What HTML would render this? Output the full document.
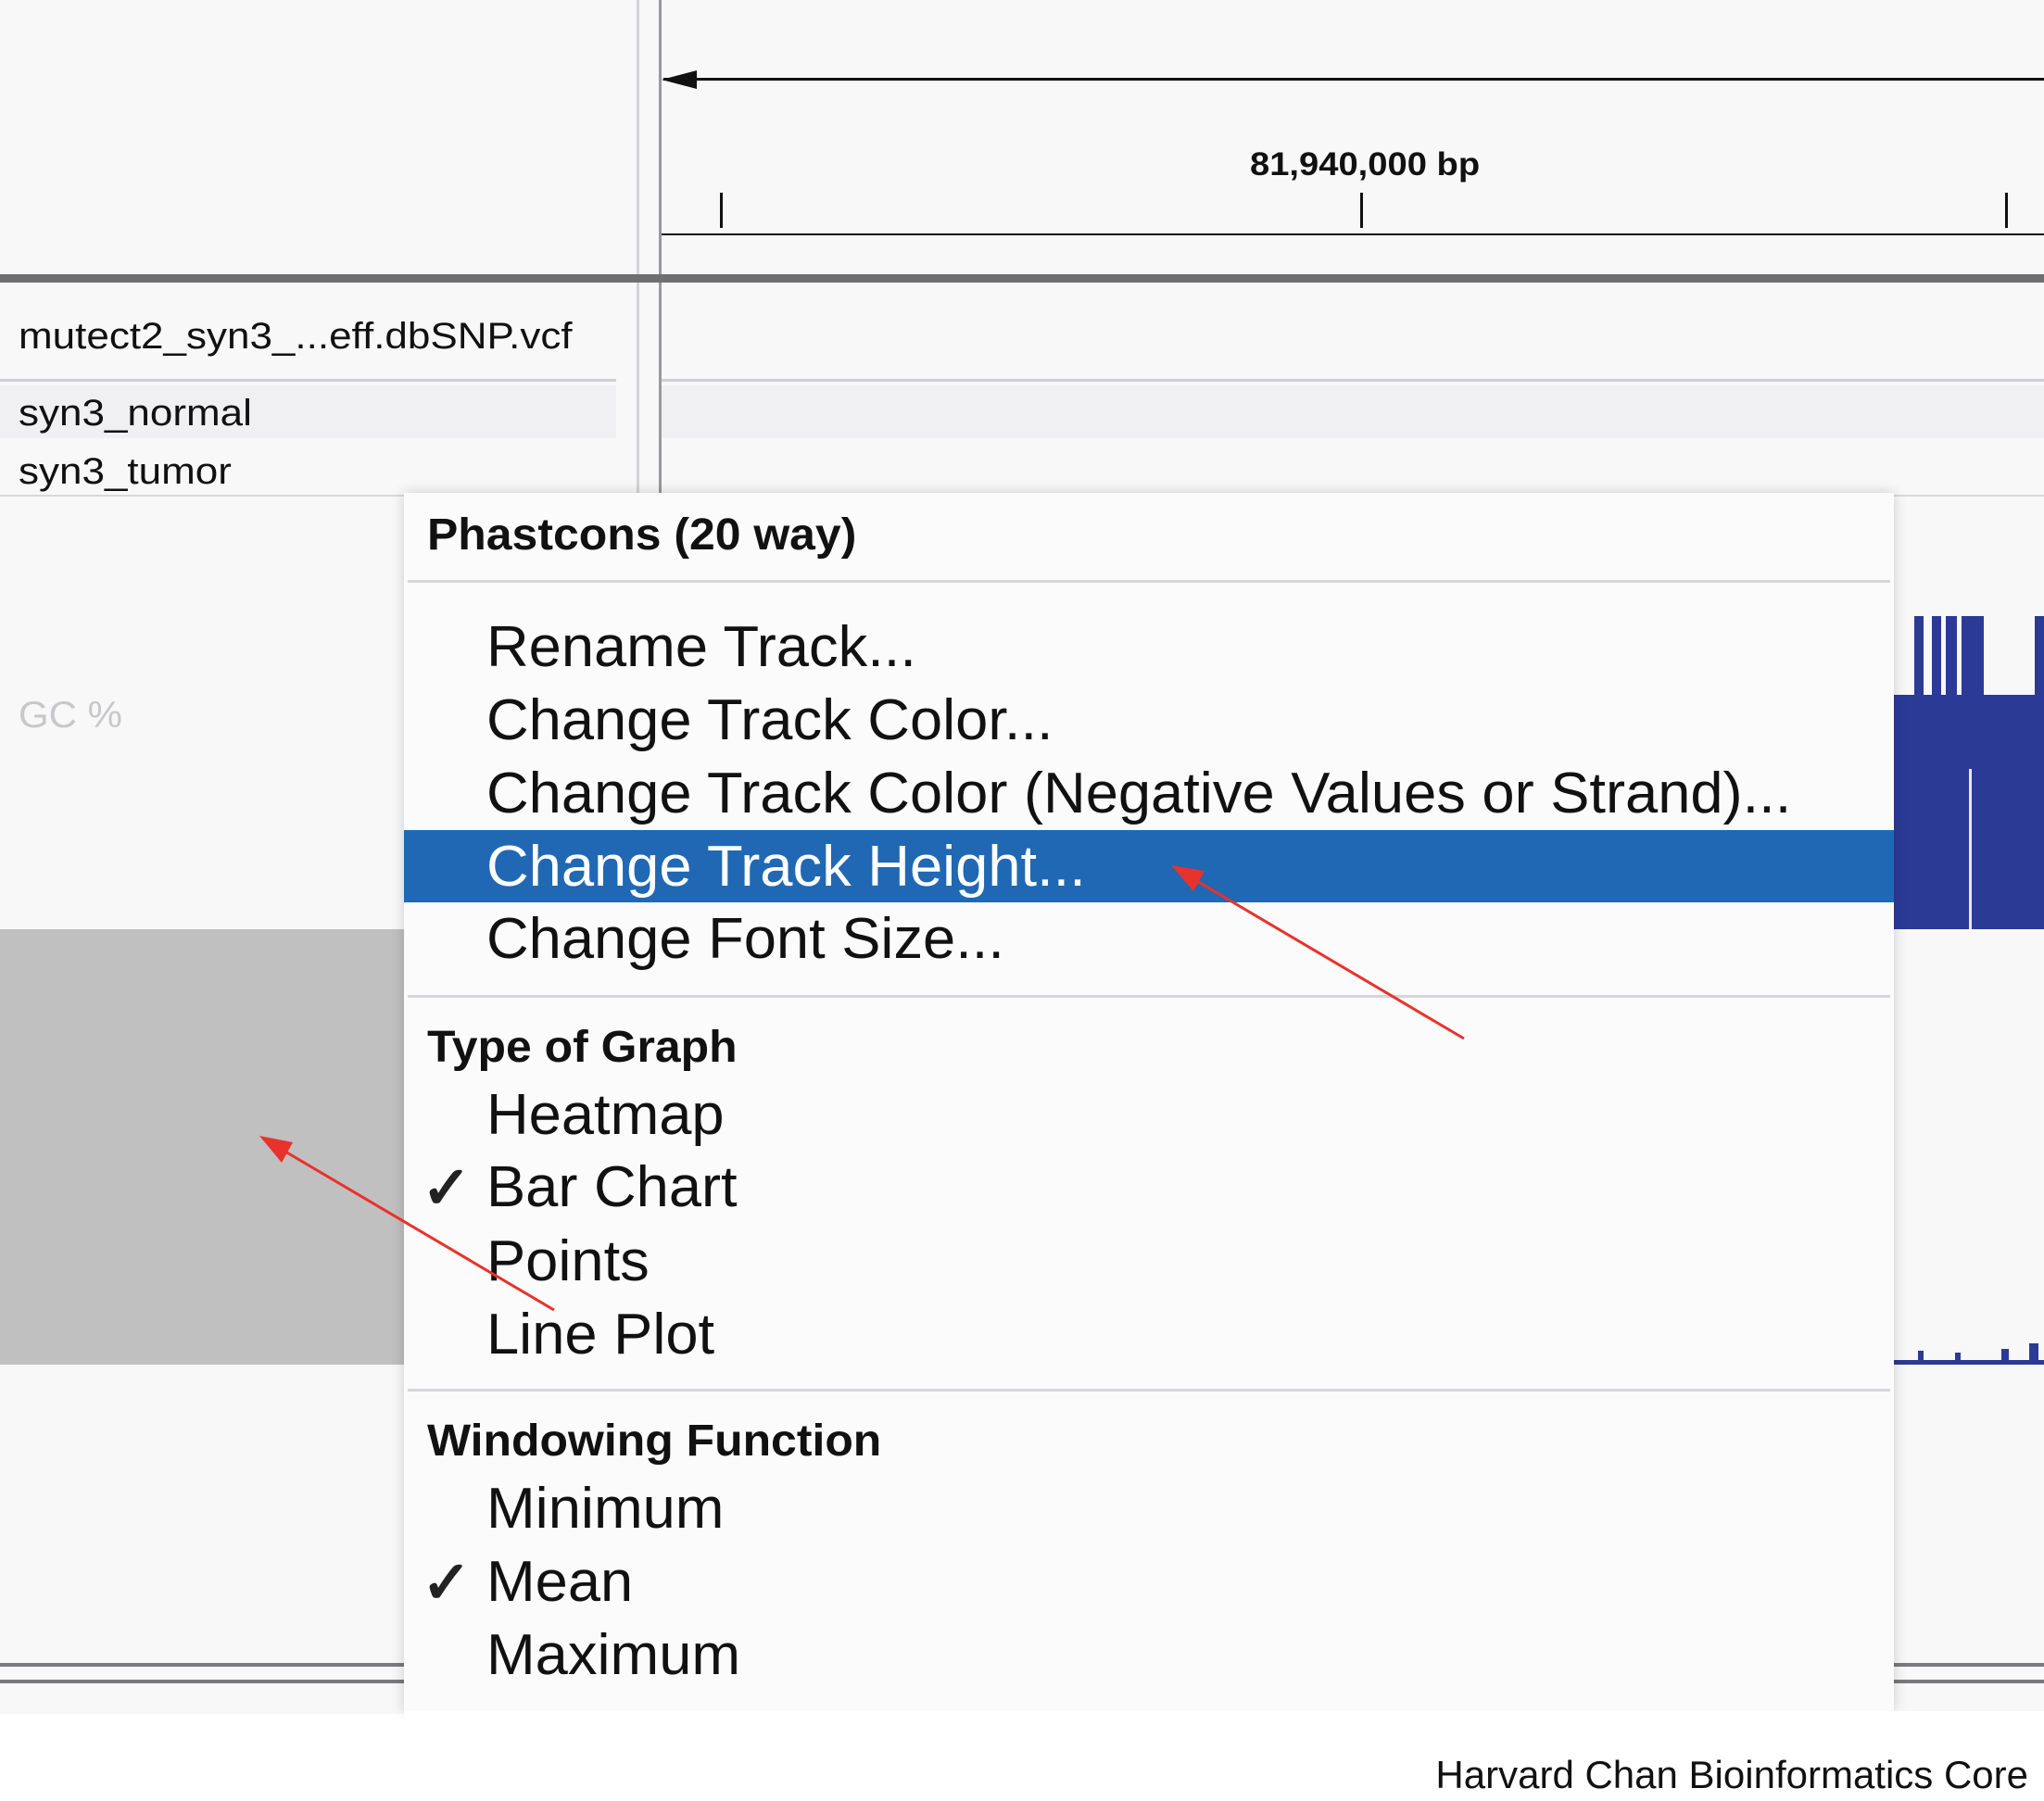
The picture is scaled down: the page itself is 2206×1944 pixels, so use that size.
<!DOCTYPE html>
<html><head><meta charset="utf-8"><style>
html,body{margin:0;padding:0}
body{width:2206px;height:1944px;position:relative;background:#fff;overflow:hidden;font-family:"Liberation Sans",sans-serif}
.a{position:absolute}
.t{position:absolute;white-space:nowrap;line-height:1}
.mi{position:absolute;left:525px;font-size:62px;color:#111;white-space:nowrap;line-height:1;transform:scaleX(1.02);transform-origin:left center}
.hd{position:absolute;left:461px;font-size:48px;font-weight:bold;color:#111;white-space:nowrap;line-height:1;transform:scaleX(1.04);transform-origin:left center}
.ck{position:absolute;left:455px;font-size:64px;font-weight:bold;color:#222;line-height:1}
.tn{position:absolute;left:20px;font-size:40px;color:#111;white-space:nowrap;line-height:1;transform:scaleX(1.1);transform-origin:left center}
</style></head><body>
<div class="a" style="left:0;top:0;width:2206px;height:1850px;background:#f8f8f9"></div>
<div class="a" style="left:687px;top:0;width:3px;height:540px;background:#d4d4d6"></div>
<div class="a" style="left:711px;top:0;width:3px;height:540px;background:#9a9a9c"></div>
<div class="a" style="left:716px;top:84px;width:1490px;height:3px;background:#111"></div>
<svg class="a" style="left:712px;top:74px" width="40" height="24"><polygon points="2,12 40,2 40,22" fill="#111"/></svg>
<div class="t" style="left:1349px;top:160px;font-size:35px;font-weight:bold;color:#111;transform:scaleX(1.09);transform-origin:left center">81,940,000 bp</div>
<div class="a" style="left:777px;top:208px;width:3px;height:38px;background:#111"></div>
<div class="a" style="left:1468px;top:208px;width:3px;height:38px;background:#111"></div>
<div class="a" style="left:2164px;top:208px;width:3px;height:38px;background:#111"></div>
<div class="a" style="left:714px;top:252px;width:1492px;height:2px;background:#111"></div>
<div class="a" style="left:0;top:296px;width:2206px;height:9px;background:#6f6f71"></div>
<div class="tn" style="top:343px">mutect2_syn3_...eff.dbSNP.vcf</div>
<div class="a" style="left:0;top:409px;width:665px;height:3px;background:#cfcfd1"></div>
<div class="a" style="left:714px;top:409px;width:1492px;height:3px;background:#cfcfd1"></div>
<div class="a" style="left:0;top:416px;width:665px;height:57px;background:#f0f0f2"></div>
<div class="a" style="left:714px;top:416px;width:1492px;height:57px;background:#f0f0f2"></div>
<div class="tn" style="top:426px">syn3_normal</div>
<div class="tn" style="top:489px">syn3_tumor</div>
<div class="a" style="left:0;top:534px;width:2206px;height:2px;background:#d8d8da"></div>
<div class="t" style="left:20px;top:752px;font-size:40px;color:#c8c8ca;transform:scaleX(1.05);transform-origin:left center">GC %</div>
<div class="a" style="left:0;top:1003px;width:436px;height:470px;background:#c0c0c0"></div>
<div class="a" style="left:2044px;top:750px;width:162px;height:253px;background:#2b3a95"></div>
<div class="a" style="left:2066px;top:665px;width:10px;height:90px;background:#2b3a95"></div>
<div class="a" style="left:2085px;top:665px;width:10px;height:175px;background:#2b3a95"></div>
<div class="a" style="left:2100px;top:665px;width:12px;height:175px;background:#2b3a95"></div>
<div class="a" style="left:2117px;top:665px;width:24px;height:90px;background:#2b3a95"></div>
<div class="a" style="left:2196px;top:665px;width:10px;height:90px;background:#2b3a95"></div>
<div class="a" style="left:2125px;top:830px;width:3px;height:173px;background:#e8e8f0"></div>
<div class="a" style="left:2044px;top:1468px;width:162px;height:5px;background:#2b3a95"></div>
<div class="a" style="left:2070px;top:1458px;width:6px;height:12px;background:#2b3a95"></div>
<div class="a" style="left:2110px;top:1460px;width:6px;height:10px;background:#2b3a95"></div>
<div class="a" style="left:2160px;top:1456px;width:8px;height:14px;background:#2b3a95"></div>
<div class="a" style="left:2190px;top:1450px;width:10px;height:20px;background:#2b3a95"></div>
<div class="a" style="left:0;top:1795px;width:2206px;height:4px;background:#7a7a7c"></div>
<div class="a" style="left:0;top:1813px;width:2206px;height:4px;background:#7a7a7c"></div>
<div class="a" style="left:0;top:1850px;width:2206px;height:94px;background:#fff"></div>
<div class="a" style="left:436px;top:532px;width:1608px;height:1315px;background:#fbfbfc;box-shadow:0 0 14px rgba(0,0,0,0.18)"></div>
<div class="hd" style="top:554px">Phastcons (20 way)</div>
<div class="a" style="left:440px;top:626px;width:1600px;height:3px;background:#d6d6d8"></div>
<div class="mi" style="top:668px">Rename Track...</div>
<div class="mi" style="top:747px">Change Track Color...</div>
<div class="mi" style="top:826px">Change Track Color (Negative Values or Strand)...</div>
<div class="a" style="left:436px;top:896px;width:1608px;height:78px;background:#2068b4"></div>
<div class="mi" style="top:905px;color:#fff">Change Track Height...</div>
<div class="mi" style="top:983px">Change Font Size...</div>
<div class="a" style="left:440px;top:1074px;width:1600px;height:3px;background:#d6d6d8"></div>
<div class="hd" style="top:1107px">Type of Graph</div>
<div class="mi" style="top:1173px">Heatmap</div>
<div class="ck" style="top:1250px">✓</div>
<div class="mi" style="top:1251px">Bar Chart</div>
<div class="mi" style="top:1331px">Points</div>
<div class="mi" style="top:1410px">Line Plot</div>
<div class="a" style="left:440px;top:1499px;width:1600px;height:3px;background:#d6d6d8"></div>
<div class="hd" style="top:1532px">Windowing Function</div>
<div class="mi" style="top:1598px">Minimum</div>
<div class="ck" style="top:1676px">✓</div>
<div class="mi" style="top:1677px">Mean</div>
<div class="mi" style="top:1756px">Maximum</div>
<div class="a" style="left:436px;top:1847px;width:1770px;height:97px;background:#fff"></div>
<svg class="a" style="left:0;top:0" width="2206" height="1944">
<line x1="1580" y1="1121" x2="1280" y2="944" stroke="#e8322b" stroke-width="3"/>
<polygon points="1264,934 1300,940 1288,962" fill="#e8322b"/>
<line x1="598" y1="1414" x2="296" y2="1236" stroke="#e8322b" stroke-width="3"/>
<polygon points="280,1226 316,1233 304,1255" fill="#e8322b"/>
</svg>
<div class="t" style="right:17px;top:1895px;font-size:42px;color:#111;transform:scaleX(1.0);transform-origin:right center">Harvard Chan Bioinformatics Core</div>
</body></html>
